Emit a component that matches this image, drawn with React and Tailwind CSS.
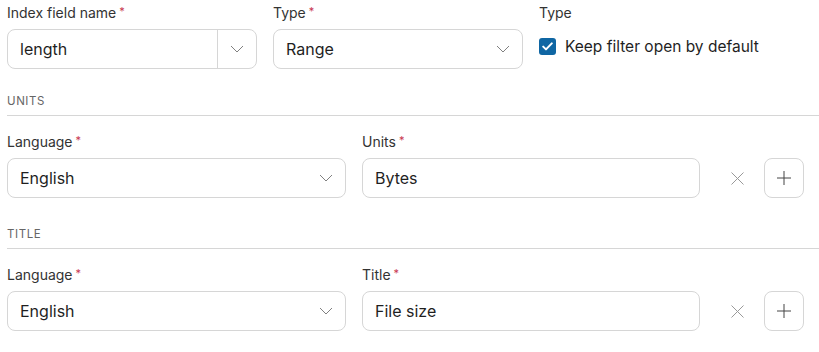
function Chevron() {
  return (
    <svg width="14" height="8" viewBox="0 0 14 8" fill="none" stroke="#808080" strokeWidth="1">
      <polyline points="1,1 7,7 13,1" />
    </svg>
  );
}

function Label({ text, required }) {
  return (
    <div className="h-5 leading-5 text-[14px] text-[#333] mb-[6px] flex items-start">
      <span>{text}</span>
      {required && <span className="text-[11px] leading-3 ml-[3px] mt-[2px] text-[#c8364f]">*</span>}
    </div>
  );
}

function Select({ value, split }) {
  return (
    <div className="h-10 border border-[#d6d6d6] rounded-lg flex items-center bg-white">
      <span className="flex-1 pl-3 text-[16px] text-[#1f1f1f]">{value}</span>
      {split ? (
        <div className="h-full w-[39px] border-l border-[#d6d6d6] flex items-center justify-center">
          <Chevron />
        </div>
      ) : (
        <div className="mr-[12px]">
          <Chevron />
        </div>
      )}
    </div>
  );
}

function TextInput({ value }) {
  return (
    <div className="h-10 border border-[#d6d6d6] rounded-lg flex items-center pl-3 text-[16px] text-[#1f1f1f] bg-white">
      {value}
    </div>
  );
}

function Heading({ text, className }) {
  return (
    <div className={`text-[11.5px] leading-4 tracking-[0.05em] text-[#666] uppercase pb-[6px] border-b border-[#d6d6d6] ${className}`}>
      {text}
    </div>
  );
}

function TranslationRow({ second, value }) {
  return (
    <div className="flex items-end mt-4">
      <div className="w-[339px]">
        <Label text="Language" required />
        <Select value="English" />
      </div>
      <div className="w-[338px] ml-4">
        <Label text={second} required />
        <TextInput value={value} />
      </div>
      <div className="w-[44px] h-10 flex items-center justify-end">
        <svg width="13" height="13" viewBox="0 0 13 13" fill="none" stroke="#999" strokeWidth="1">
          <line x1="0.5" y1="0.5" x2="12.5" y2="12.5" />
          <line x1="12.5" y1="0.5" x2="0.5" y2="12.5" />
        </svg>
      </div>
      <button className="w-10 h-10 ml-[20px] border border-[#d6d6d6] rounded-lg flex items-center justify-center bg-white">
        <svg width="16" height="16" viewBox="0 0 16 16" fill="none" stroke="#444" strokeWidth="1">
          <line x1="8" y1="1" x2="8" y2="15" />
          <line x1="1" y1="8" x2="15" y2="8" />
        </svg>
      </button>
    </div>
  );
}

export default function App() {
  return (
    <div className="w-[819px] h-[352px] bg-white pl-[7px] pt-[3px] overflow-hidden" style={{ fontFamily: 'Inter, "Noto Sans", sans-serif' }}>
      <div className="flex gap-4">
        <div className="w-[250px]">
          <Label text="Index field name" required />
          <Select value="length" split />
        </div>
        <div className="w-[250px]">
          <Label text="Type" required />
          <Select value="Range" />
        </div>
        <div className="w-[250px]">
          <Label text="Type" />
          <div className="flex items-center gap-[9px] mt-[12px]">
            <span className="w-[17px] h-[17px] rounded-[3px] bg-[#0f66a3] flex items-center justify-center">
              <svg width="11" height="9" viewBox="0 0 11 9" fill="none" stroke="white" strokeWidth="2" strokeLinecap="round" strokeLinejoin="round">
                <polyline points="1.2,4.6 4,7.4 9.8,1.4" />
              </svg>
            </span>
            <span className="text-[15.5px] text-[#1f1f1f]">Keep filter open by default</span>
          </div>
        </div>
      </div>

      <Heading text="Units" className="mt-6" />
      <TranslationRow second="Units" value="Bytes" />

      <Heading text="Title" className="mt-7" />
      <TranslationRow second="Title" value="File size" />
    </div>
  );
}
